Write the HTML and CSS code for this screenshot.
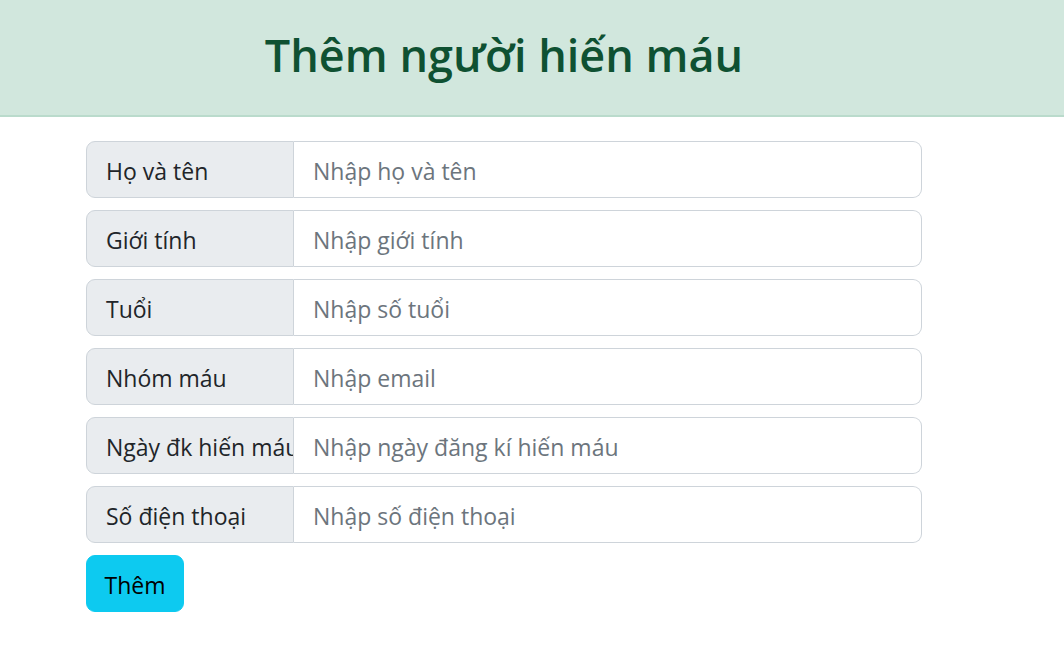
FILE: index.html
```html
<!DOCTYPE html>
<html lang="vi">
<head>
<meta charset="utf-8">
<title>Thêm người hiến máu</title>
<link rel="stylesheet" href="styles.css">
</head>
<body>
<header class="banner">
  <div class="wrap">
    <h1 class="title">Thêm người hiến máu</h1>
  </div>
</header>
<main class="wrap form">
  <div class="group"><span class="label">Họ và tên</span><input class="field" type="text" placeholder="Nhập họ và tên"></div>
  <div class="group"><span class="label">Giới tính</span><input class="field" type="text" placeholder="Nhập giới tính"></div>
  <div class="group"><span class="label">Tuổi</span><input class="field" type="text" placeholder="Nhập số tuổi"></div>
  <div class="group"><span class="label">Nhóm máu</span><input class="field" type="text" placeholder="Nhập email"></div>
  <div class="group"><span class="label">Ngày đk hiến máu</span><input class="field" type="text" placeholder="Nhập ngày đăng kí hiến máu"></div>
  <div class="group"><span class="label">Số điện thoại</span><input class="field" type="text" placeholder="Nhập số điện thoại"></div>
  <button class="btn" type="button">Thêm</button>
</main>
</body>
</html>
```
FILE: styles.css
```css
* { box-sizing: border-box; }
body {
  margin: 0;
  font-family: "Open Sans", "Noto Sans", sans-serif;
  color: #212529;
  background: #fff;
}
.wrap {
  width: 836px;
  margin: 0 auto 0 86px;
}
.banner {
  background: #d1e7dd;
  border-bottom: 2px solid #badbcc;
  height: 117px;
  display: flex;
  align-items: center;
}
.title {
  margin: 0 0 6px;
  text-align: center;
  font-size: 45px;
  font-weight: 600;
  color: #0f5132;
  line-height: 1.2;
}
.form {
  padding-top: 24px;
  display: flex;
  flex-direction: column;
  gap: 12px;
  align-items: flex-start;
}
.group {
  display: flex;
  width: 100%;
  height: 57px;
}
.label {
  flex: 0 0 208px;
  background: #e9ecef;
  border: 1.5px solid #ced4da;
  border-radius: 9px 0 0 9px;
  padding: 2px 19px 0;
  font-size: 23px;
  line-height: 54px;
  white-space: nowrap;
  overflow: hidden;
}
.field {
  flex: 1;
  min-width: 0;
  border: 1.5px solid #ced4da;
  border-left: none;
  border-radius: 0 9px 9px 0;
  padding: 2px 19px 0;
  font-family: inherit;
  font-size: 23px;
  color: #212529;
  outline: none;
}
.field::placeholder { color: #6c757d; opacity: 1; }
.btn {
  height: 57px;
  width: 98px;
  background: #0dcaf0;
  border: 1.5px solid #0dcaf0;
  border-radius: 9px;
  font-family: inherit;
  font-size: 23px;
  color: #000;
  padding: 2px 0 0;
}
```
